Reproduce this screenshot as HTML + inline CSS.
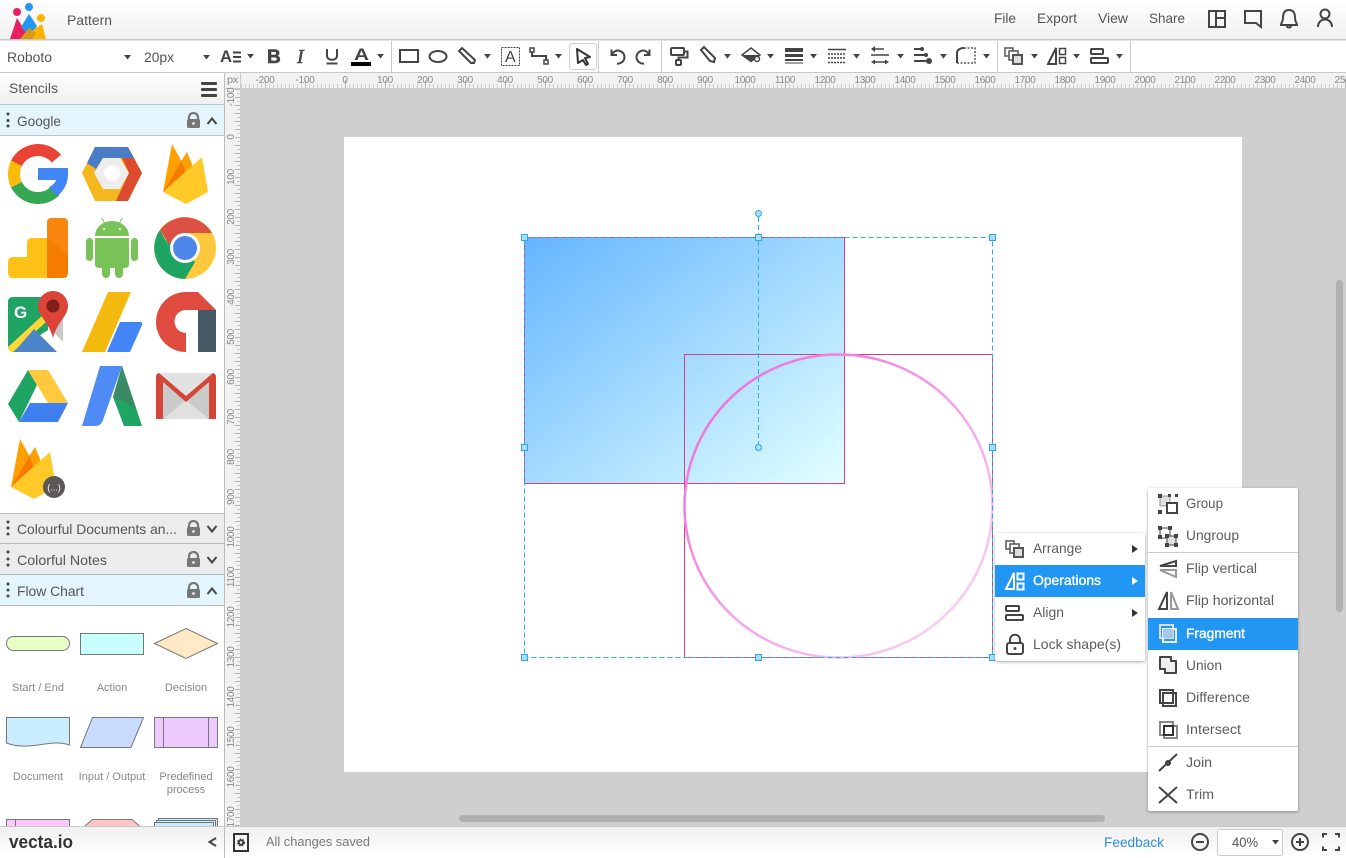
<!DOCTYPE html>
<html><head><meta charset="utf-8"><title>Pattern</title>
<style>
html,body{margin:0;padding:0;width:1346px;height:858px;overflow:hidden;background:#fff}
svg{display:block}
text{font-family:"Liberation Sans",sans-serif;fill:#555;font-size:14px}
.r text{font-size:10px;fill:#888;letter-spacing:-.3px}
.m text{font-size:14px;fill:#5c5c5c}
.i{fill:none;stroke:#444;stroke-width:2}
</style></head><body>
<svg width="1346" height="858" viewBox="0 0 1346 858" xmlns="http://www.w3.org/2000/svg" shape-rendering="geometricPrecision">
<defs>
<linearGradient id="top" x1="0" y1="0" x2="0" y2="1"><stop offset="0" stop-color="#fff"/><stop offset="1" stop-color="#f0f0f0"/></linearGradient>
<linearGradient id="bot" x1="0" y1="0" x2="0" y2="1"><stop offset="0" stop-color="#f0f0f0"/><stop offset="1" stop-color="#fff"/></linearGradient>
<linearGradient id="sq" x1="0" y1="0" x2="1" y2="1"><stop offset="0" stop-color="#64b5ff"/><stop offset="1" stop-color="#e2ffff"/></linearGradient>
<linearGradient id="circ" x1="0" y1="0" x2="1" y2="1"><stop offset="0" stop-color="#ee62dc"/><stop offset="1" stop-color="#fbdcf6"/></linearGradient>
<pattern id="hx" x="1" y="0" width="4" height="20" patternUnits="userSpaceOnUse"><rect width="1" height="20" fill="#cfcfcf"/></pattern>
<pattern id="hx2" x="1" y="0" width="40" height="20" patternUnits="userSpaceOnUse"><rect x="24" width="1" height="20" fill="#b5b5b5"/></pattern>
<pattern id="vx" x="0" y="1" width="20" height="4" patternUnits="userSpaceOnUse"><rect width="20" height="1" fill="#cfcfcf"/></pattern>
<pattern id="vx2" x="0" y="1" width="20" height="8" patternUnits="userSpaceOnUse"><rect width="20" height="1" fill="#b5b5b5"/></pattern>
<path id="c" d="M0 0h7l-3.500 4.500z" fill="#444"/>
<filter id="sh" x="-10%" y="-10%" width="120%" height="120%"><feDropShadow dx="0" dy="1" stdDeviation="1.500" flood-color="#000" flood-opacity=".35"/></filter>
<g id="fb"><path d="M163 192L172 144L182 162L163 192Z" fill="#ffa000"/><path d="M163 192L187 152L193 167L178 192Z" fill="#f57c00"/><path d="M182 162L187 152L193 167L186 175Z" fill="#ffa000"/><path d="M163 192L202 157L208 192L186 204Z" fill="#ffca28"/></g>
<g id="lk"><path d="M0 7V4.500C0 -1.500 9 -1.500 9 4.500V7" fill="none" stroke="#777" stroke-width="2.200"/><rect x="-2" y="6" width="13" height="9" rx="1.500" fill="#777"/><circle cx="4.500" cy="10.500" r="1.400" fill="#fff" opacity=".85"/></g>
</defs>

<!-- canvas -->
<rect x="225" y="72" width="1121" height="786" fill="#cfcfcf"/>
<rect x="344" y="137" width="898" height="635" fill="#fff"/>

<!-- shapes -->
<rect x="524.500" y="237.500" width="320" height="246" fill="url(#sq)" stroke="#d0408c"/>
<rect x="684.500" y="354.500" width="308" height="303" fill="none" stroke="#d0408c"/>
<ellipse cx="838.500" cy="506" rx="154" ry="151.500" fill="none" stroke="url(#circ)" stroke-width="2.500"/>
<rect x="524.500" y="237.500" width="468" height="420" fill="none" stroke="#34aee0" stroke-dasharray="5 3"/>
<path d="M758.500 217V444" stroke="#34aee0" stroke-dasharray="5 3" fill="none"/>
<g fill="#a9defc" stroke="#2ea6ea">
<rect x="521.500" y="234.500" width="6" height="6"/><rect x="755.500" y="234.500" width="6" height="6"/><rect x="989.500" y="234.500" width="6" height="6"/>
<rect x="521.500" y="444.500" width="6" height="6"/><rect x="989.500" y="444.500" width="6" height="6"/>
<rect x="521.500" y="654.500" width="6" height="6"/><rect x="755.500" y="654.500" width="6" height="6"/><rect x="989.500" y="654.500" width="6" height="6"/>
<circle cx="758.500" cy="213.500" r="3"/><circle cx="758.500" cy="447.500" r="3"/>
</g>

<!-- rulers -->
<rect x="225" y="73" width="1121" height="15" fill="#f2f2f2"/>
<rect x="225" y="88" width="15" height="739" fill="#f2f2f2"/>
<rect x="241" y="84" width="1105" height="4" fill="url(#hx)"/>
<rect x="241" y="80" width="1105" height="8" fill="url(#hx2)"/>
<rect x="237" y="88" width="3" height="739" fill="url(#vx)"/>
<rect x="235" y="88" width="5" height="739" fill="url(#vx2)"/>
<rect x="240" y="73" width="1" height="15" fill="#ccc"/>
<rect x="225" y="88" width="15" height="1" fill="#ccc"/>
<g class="r">
<text x="227" y="83" textLength="11" lengthAdjust="spacingAndGlyphs">px</text>
<text x="265" y="83" text-anchor="middle">-200</text><text x="305" y="83" text-anchor="middle">-100</text><text x="345" y="83" text-anchor="middle">0</text><text x="385" y="83" text-anchor="middle">100</text><text x="425" y="83" text-anchor="middle">200</text><text x="465" y="83" text-anchor="middle">300</text><text x="505" y="83" text-anchor="middle">400</text><text x="545" y="83" text-anchor="middle">500</text><text x="585" y="83" text-anchor="middle">600</text><text x="625" y="83" text-anchor="middle">700</text><text x="665" y="83" text-anchor="middle">800</text><text x="705" y="83" text-anchor="middle">900</text><text x="745" y="83" text-anchor="middle">1000</text><text x="785" y="83" text-anchor="middle">1100</text><text x="825" y="83" text-anchor="middle">1200</text><text x="865" y="83" text-anchor="middle">1300</text><text x="905" y="83" text-anchor="middle">1400</text><text x="945" y="83" text-anchor="middle">1500</text><text x="985" y="83" text-anchor="middle">1600</text><text x="1025" y="83" text-anchor="middle">1700</text><text x="1065" y="83" text-anchor="middle">1800</text><text x="1105" y="83" text-anchor="middle">1900</text><text x="1145" y="83" text-anchor="middle">2000</text><text x="1185" y="83" text-anchor="middle">2100</text><text x="1225" y="83" text-anchor="middle">2200</text><text x="1265" y="83" text-anchor="middle">2300</text><text x="1305" y="83" text-anchor="middle">2400</text><text x="1345" y="83" text-anchor="middle">2500</text>
<g text-anchor="middle">
<text transform="translate(234 97) rotate(-90)">-100</text><text transform="translate(234 137) rotate(-90)">0</text><text transform="translate(234 177) rotate(-90)">100</text><text transform="translate(234 217) rotate(-90)">200</text><text transform="translate(234 257) rotate(-90)">300</text><text transform="translate(234 297) rotate(-90)">400</text><text transform="translate(234 337) rotate(-90)">500</text><text transform="translate(234 377) rotate(-90)">600</text><text transform="translate(234 417) rotate(-90)">700</text><text transform="translate(234 457) rotate(-90)">800</text><text transform="translate(234 497) rotate(-90)">900</text><text transform="translate(234 537) rotate(-90)">1000</text><text transform="translate(234 577) rotate(-90)">1100</text><text transform="translate(234 617) rotate(-90)">1200</text><text transform="translate(234 657) rotate(-90)">1300</text><text transform="translate(234 697) rotate(-90)">1400</text><text transform="translate(234 737) rotate(-90)">1500</text><text transform="translate(234 777) rotate(-90)">1600</text><text transform="translate(234 817) rotate(-90)">1700</text>
</g></g>

<!-- scrollbars -->
<rect x="459" y="815" width="646" height="7" rx="3.500" fill="#b0b0b0"/>
<rect x="1336" y="280" width="7" height="332" rx="3.500" fill="#b0b0b0"/>

<!-- top bar -->
<rect width="1346" height="39" fill="url(#top)"/>
<rect y="39" width="1346" height="1.500" fill="#c8c8c8"/>
<path d="M10 39L17 18L30 39Z" fill="#e91e63"/><path d="M21 27L29 14L37 26L30 36Z" fill="#2196f3"/><path d="M20 39L42 24L46 39Z" fill="#ffb300"/><path d="M20 39L29 28L36 33L32 39Z" fill="#d89a16"/>
<circle cx="17" cy="12" r="4" fill="#e91e63"/><circle cx="29" cy="7" r="4" fill="#2196f3"/><circle cx="41" cy="18" r="4" fill="#ffb300"/>
<text x="67" y="25" font-size="13" textLength="45" lengthAdjust="spacingAndGlyphs">Pattern</text>
<text x="994" y="23" textLength="22" lengthAdjust="spacingAndGlyphs">File</text>
<text x="1037" y="23" textLength="40" lengthAdjust="spacingAndGlyphs">Export</text>
<text x="1098" y="23" textLength="30" lengthAdjust="spacingAndGlyphs">View</text>
<text x="1149" y="23" textLength="36" lengthAdjust="spacingAndGlyphs">Share</text>
<g class="i">
<rect x="1209" y="11" width="16" height="16"/><path d="M1216 11V27M1216 18H1225"/>
<path d="M1245 11H1261V27L1256 23H1245Z"/>
<path d="M1289 10C1284 10 1283 14 1283 18C1283 22 1281 23 1281 25H1297C1297 23 1295 22 1295 18C1295 14 1294 10 1289 10ZM1287 26C1287 28 1291 28 1291 26"/>
<circle cx="1325" cy="14" r="4.500"/><path d="M1318 27C1318 17 1332 17 1332 27"/>
</g>

<!-- toolbar -->
<rect y="40.500" width="1346" height="31.500" fill="#fff"/>
<rect y="72" width="1346" height="1" fill="#c8c8c8"/>
<g fill="#ccc"><rect x="391" y="41" width="1" height="31"/><rect x="598" y="41" width="1" height="31"/><rect x="661" y="41" width="1" height="31"/><rect x="997" y="41" width="1" height="31"/><rect x="1130" y="41" width="1" height="31"/></g>
<text x="7" y="62" textLength="45" lengthAdjust="spacingAndGlyphs">Roboto</text>
<text x="144" y="62" textLength="30" lengthAdjust="spacingAndGlyphs">20px</text>
<use href="#c" x="124" y="55"/><use href="#c" x="203" y="55"/><use href="#c" x="247" y="54"/><use href="#c" x="377" y="54"/><use href="#c" x="484" y="54"/><use href="#c" x="555" y="54"/><use href="#c" x="724" y="54"/><use href="#c" x="767" y="54"/><use href="#c" x="810" y="54"/><use href="#c" x="853" y="54"/><use href="#c" x="897" y="54"/><use href="#c" x="940" y="54"/><use href="#c" x="983" y="54"/><use href="#c" x="1031" y="54"/><use href="#c" x="1073" y="54"/><use href="#c" x="1116" y="54"/>
<text x="220" y="62" font-size="17" font-weight="bold" style="font-size:17px;fill:#444" textLength="12" lengthAdjust="spacingAndGlyphs">A</text>
<path d="M233 52.500H241M233 57H241M233 61.500H241" class="i" stroke-width="1.500"/>
<text x="267" y="63" style="font-size:19px;font-weight:bold;fill:#444;stroke:#444;stroke-width:.6px">B</text>
<text x="297" y="63" style="font-family:'Liberation Serif',serif;font-size:20px;font-style:italic;fill:#444;stroke:#444;stroke-width:.5px">I</text>
<path d="M327 49V56C327 61 337 61 337 56V49M326.500 63.500H337.500" class="i"/>
<text x="354" y="60" style="font-size:17px;fill:#444;font-weight:bold" textLength="15" lengthAdjust="spacingAndGlyphs">A</text>
<rect x="351" y="62" width="20" height="4" fill="#000"/>
<g class="i">
<rect x="400" y="50" width="18" height="12"/>
<ellipse cx="438" cy="56.500" rx="8.500" ry="5.500"/>
<path d="M459 51L462 48L475 60L474 63L471 63Z"/>
<rect x="501.500" y="47.500" width="18" height="18" stroke-width="1" stroke-dasharray="2 1"/>
<rect x="530" y="48" width="4" height="4" stroke-width="1.500"/><rect x="544" y="60" width="4" height="4" stroke-width="1.500"/><path d="M532 52V56H546V60"/>
<path d="M611.500 49.500V55H617"/><path d="M612 54.500A6.500 6.500 0 1 1 617 63.500"/>
<path d="M649.500 49.500V55H644"/><path d="M649 54.500A6.500 6.500 0 1 0 644 63.500"/>
<rect x="671" y="48" width="13" height="7" rx="1"/><path d="M684 51.500H687.500V57.500H678.500V60"/>
<rect x="676" y="60" width="5" height="5" rx="1"/>
<path d="M701 50L704 47L715 58L714 62L710 61Z"/>
</g>
<text x="505" y="62" style="font-size:16px;fill:#444">A</text>
<rect x="569.500" y="43.500" width="27" height="26" rx="3" fill="#fff" stroke="#d0d0d0"/>
<path d="M577 49L590 57L585 58L588 64L586 65L583 60L578 63Z" fill="#fff" stroke="#333" stroke-width="2" stroke-linejoin="round"/>
<path d="M751 48L760 55L751 61.500L742 55Z" fill="none" stroke="#444" stroke-width="1.500"/><path d="M742 55H760L751 61.500Z" fill="#444"/><circle cx="757" cy="59" r="2.500" fill="#fff" stroke="#444" stroke-width="1.500"/>
<g fill="#444"><rect x="785" y="48" width="18" height="4"/><rect x="785" y="54" width="18" height="3"/><rect x="785" y="59" width="18" height="2"/><rect x="785" y="62.500" width="18" height="1"/></g>
<g stroke="#444" fill="none"><path d="M828 49.500H846" stroke-width="1.500"/><path d="M828 54H846M828 58H846M828 62.500H846" stroke-width="1.500" stroke-dasharray="2 1"/></g>
<g stroke="#444" stroke-width="1.500" fill="none"><path d="M873 49H884M871 55H889M873 62H887"/></g>
<g fill="#444"><path d="M871 49L875 46V52Z"/><path d="M871 62L875 59.500V64.500Z"/><path d="M889 62L885 59.500V64.500Z"/></g>
<g fill="#444"><rect x="914" y="48" width="8" height="2"/><rect x="914" y="54" width="13" height="2"/><rect x="914" y="60" width="17" height="2"/><circle cx="929" cy="61" r="3"/><circle cx="926" cy="55" r="2"/><circle cx="922" cy="49" r="2"/></g>
<path d="M964 48H975V63H957V53" fill="none" stroke="#555" stroke-width="1.500" stroke-dasharray="2 1.500"/>
<path d="M957 63V53C957 50 960 48 964 48" fill="none" stroke="#444" stroke-width="2"/>
<g fill="#fff" stroke="#555" stroke-width="1.500"><rect x="1005" y="48" width="8" height="8"/><rect x="1009" y="51" width="9" height="9"/></g><rect x="1013" y="55" width="9" height="9" fill="#ddd" stroke="#555" stroke-width="2"/>
<g class="i"><path d="M1048 64L1056 48V64Z"/><rect x="1059.500" y="48.500" width="6" height="6" stroke-width="1.500"/><rect x="1059.500" y="57.500" width="6" height="6" stroke-width="1.500"/>
<rect x="1091" y="49" width="12" height="5" rx="1"/><rect x="1091" y="58" width="17" height="5" rx="1"/></g>

<!-- sidebar -->
<rect y="73" width="225" height="785" fill="#fff"/>
<rect x="224" y="73" width="1" height="754" fill="#bbb"/>
<rect y="73" width="224" height="31" fill="url(#top)"/>
<rect y="104" width="224" height="1" fill="#bcc5c9"/>
<text x="9" y="93" textLength="49" lengthAdjust="spacingAndGlyphs">Stencils</text>
<g fill="#444"><rect x="201" y="82" width="16" height="3" rx="1"/><rect x="201" y="88" width="16" height="3" rx="1"/><rect x="201" y="94" width="16" height="3" rx="1"/></g>
<rect y="105" width="224" height="30" fill="#e3f6fd"/>
<rect y="135" width="224" height="1" fill="#bcc5c9"/>
<rect y="513" width="224" height="1" fill="#bbb"/>
<rect y="514" width="224" height="29" fill="#ececec"/>
<rect y="543" width="224" height="1" fill="#bbb"/>
<rect y="544" width="224" height="30" fill="#ececec"/>
<rect y="574" width="224" height="1" fill="#bbb"/>
<rect y="575" width="224" height="30" fill="#e3f6fd"/>
<rect y="605" width="224" height="1" fill="#bbb"/>
<text x="17" y="126" textLength="44" lengthAdjust="spacingAndGlyphs">Google</text>
<text x="17" y="534" textLength="160" lengthAdjust="spacingAndGlyphs">Colourful Documents an...</text>
<text x="17" y="565" textLength="90" lengthAdjust="spacingAndGlyphs">Colorful Notes</text>
<text x="17" y="596" textLength="67" lengthAdjust="spacingAndGlyphs">Flow Chart</text>
<g fill="#444"><circle cx="8" cy="114" r="1.500"/><circle cx="8" cy="120.500" r="1.500"/><circle cx="8" cy="126" r="1.500"/><circle cx="8" cy="522" r="1.500"/><circle cx="8" cy="528" r="1.500"/><circle cx="8" cy="534" r="1.500"/><circle cx="8" cy="552" r="1.500"/><circle cx="8" cy="559" r="1.500"/><circle cx="8" cy="565" r="1.500"/><circle cx="8" cy="584" r="1.500"/><circle cx="8" cy="590" r="1.500"/><circle cx="8" cy="596" r="1.500"/></g>
<use href="#lk" x="189" y="113"/><use href="#lk" x="189" y="521"/><use href="#lk" x="189" y="552"/><use href="#lk" x="189" y="583"/>
<g fill="none" stroke="#444" stroke-width="2"><path d="M207.500 124L212 118.500L216.500 124"/><path d="M207.500 526L212 531.500L216.500 526"/><path d="M207.500 557L212 562.500L216.500 557"/><path d="M207.500 594L212 588.500L216.500 594"/></g>

<!-- Google -->
<path d="M56.400 158.600A24 24 0 0 0 16.500 163.300" fill="none" stroke="#ea4335" stroke-width="12"/>
<path d="M16.500 163.300A24 24 0 0 0 16.500 184.700" fill="none" stroke="#fbbc05" stroke-width="12"/>
<path d="M16.500 184.700A24 24 0 0 0 55 191" fill="none" stroke="#34a853" stroke-width="12"/>
<path d="M38 168H68V174C68 184 63 192 57 196L49 187C53 185 55 183 56 180H38Z" fill="#4285f4"/>
<!-- cloud -->
<path d="M95 147H128L142 173L128 201H95L82 173Z" fill="#f4b71e" stroke="#f4b71e" stroke-width="0"/>
<path d="M95 147H128L134 158H103L96 169L87 163Z" fill="#4a7bc6"/>
<path d="M122 158H134L142 173L128 201H116L129 173Z" fill="#dd4b2f"/>
<path d="M94 173L103 158H120L129 173L120 189H103Z" fill="#ededed"/>
<circle cx="112" cy="173" r="8" fill="#fff"/>
<!-- firebase -->
<use href="#fb"/>
<!-- analytics -->
<path d="M47 223Q47 218 52 218H63Q68 218 68 223V273Q68 278 63 278H47Z" fill="#f57c00"/><path d="M47 223Q47 218 52 218H63Q68 218 68 223V256L47 237Z" fill="#f9860f"/>
<path d="M27 243Q27 238 32 238H47V278H13Q8 278 8 273V262Q8 257 13 257H27Z" fill="#ffc017"/>
<!-- android -->
<g fill="#78c257"><path d="M95 236A17 15 0 0 1 129 236Z"/><path d="M95 238H129V264Q129 268 125 268H99Q95 268 95 264Z"/><rect x="86" y="238" width="7" height="23" rx="3.500"/><rect x="131" y="238" width="7" height="23" rx="3.500"/><rect x="102" y="262" width="8" height="16" rx="4"/><rect x="115" y="262" width="8" height="16" rx="4"/></g>
<path d="M102 218L105 224M122 218L119 224" stroke="#78c257" stroke-width="1"/><circle cx="104" cy="229" r="1" fill="#fff"/><circle cx="120" cy="229" r="1" fill="#fff"/>
<!-- chrome -->
<circle cx="185" cy="248" r="31" fill="#ffc83d"/>
<path d="M185 279A31 31 0 0 1 160 230L173 254L185 262Z" fill="#1da462"/><path d="M185 279L172 255L163 232L185 248L195 262Z" fill="#1da462"/>
<path d="M160 230A31 31 0 0 1 212 233H185Q172 233 172 248Z" fill="#dd5045"/>
<circle cx="185" cy="248" r="15" fill="#fff"/><circle cx="185" cy="248" r="12" fill="#4f86ec"/>
<!-- maps -->
<path d="M13 297H48V330L14 352Q8 352 8 346V302Q8 297 13 297Z" fill="#1fa463"/>
<path d="M8 347L43 315L46 322L13 352Q8 352 8 347Z" fill="#fdd835"/>
<path d="M14 352L34 329L57 352Z" fill="#4b84c8"/>
<path d="M46 322L63 340V325H55Z" fill="#fff"/><path d="M44 322L63 342V312L53 331Z" fill="#c8c8c8"/>
<path d="M53 291A15 15 0 0 1 68 306C68 316 57 322 53 338C49 322 38 316 38 306A15 15 0 0 1 53 291Z" fill="#db4437"/>
<circle cx="53" cy="306" r="6.500" fill="#7f1f18"/>
<text x="14" y="318" style="font-size:17px;font-weight:bold;fill:#fff">G</text>
<!-- adsense -->
<path d="M82 352L108 292H131L105 352Z" fill="#f4b90f"/>
<path d="M107 352L120 322H140Q143 322 142 325L130 352Z" fill="#4285f4"/>
<!-- admob -->
<path d="M186 352V333A11.500 11.500 0 0 1 186 310H216L198 292H186A30 30 0 0 0 186 352Z" fill="#e04b3f"/>
<rect x="198" y="310" width="18" height="42" fill="#455a64"/>
<!-- drive -->
<path d="M8 404L28 370L37 385L19 422Z" fill="#1fa463"/>
<path d="M19 422L30 403H68L58 422Z" fill="#3f7fef"/>
<path d="M28 370H48L68 403H48Z" fill="#ffc83d"/>
<!-- adwords -->
<path d="M82 426L100 366H122L103 420Q101 426 96 426Z" fill="#4f8bf5"/>
<path d="M122 366L142 426H124L113 397Z" fill="#1fa463"/><path d="M122 366L136 408L113 397Z" fill="#3b8a66"/>
<!-- gmail -->
<rect x="156" y="373" width="60" height="46" rx="3" fill="#e2e2e2"/>
<path d="M163 376L186 400L209 376V419H163Z" fill="#cacaca"/>
<path d="M163 419L186 400L209 419Z" fill="#e0e0e0"/>
<path d="M159 373L186 396L213 373Q216 374 216 377V419H209V382L186 402L163 382V419H156V377Q156 374 159 373Z" fill="#d44638"/>
<!-- firebase functions -->
<use href="#fb" transform="translate(-152 295)"/>
<circle cx="54" cy="487" r="11" fill="#5d5757"/>
<text x="54" y="490.500" text-anchor="middle" style="font-size:9px;fill:#fff">(...)</text>

<!-- flow -->
<g stroke="#777">
<rect x="6.500" y="636.500" width="63" height="14" rx="7" fill="#e8ffc6"/>
<rect x="80.500" y="633.500" width="63" height="21" fill="#c8ffff"/>
<path d="M154.500 643.500L186 628.500L217.500 643.500L186 658.500Z" fill="#ffe9c6"/>
<path d="M6.500 717.500H69.500V745C50 738 30 752 6.500 743Z" fill="#c9ecff"/>
<path d="M92.500 717.500H143.500L131 747.500H80.500Z" fill="#c9dcff"/>
<rect x="154.500" y="717.500" width="63" height="30" fill="#eccaff"/><path d="M163.500 717.500V747.500M208.500 717.500V747.500" fill="none"/>
<rect x="6.500" y="819.500" width="63" height="14" fill="#fcc9ff"/><path d="M15.500 819.500V830" fill="none"/>
<path d="M80.500 830L92.500 819.500H132L144 830Z" fill="#ffc4c4"/>
<rect x="158.500" y="818.500" width="59" height="14" fill="#c9ecff"/><rect x="156.500" y="820.500" width="59" height="14" fill="#c9ecff"/><rect x="154.500" y="822.500" width="59" height="14" fill="#c9ecff"/>
</g>
<g text-anchor="middle" style="fill:#888">
<text x="38" y="691" style="font-size:11px;fill:#888">Start / End</text>
<text x="112" y="691" style="font-size:11px;fill:#888">Action</text>
<text x="186" y="691" style="font-size:11px;fill:#888">Decision</text>
<text x="38" y="780" style="font-size:11px;fill:#888">Document</text>
<text x="112" y="780" style="font-size:11px;fill:#888">Input / Output</text>
<text x="186" y="780" style="font-size:11px;fill:#888">Predefined</text>
<text x="186" y="793" style="font-size:11px;fill:#888">process</text>
</g>

<!-- bottom bar -->
<rect y="827" width="1346" height="31" fill="url(#bot)"/>
<rect y="826" width="1346" height="1" fill="#c8c8c8"/>
<rect x="224" y="827" width="1" height="31" fill="#bbb"/>
<text x="9" y="848" style="font-size:18px;font-weight:bold;fill:#333" textLength="64" lengthAdjust="spacingAndGlyphs">vecta.io</text>
<path d="M216 838L209.500 842L216 846" fill="none" stroke="#444" stroke-width="2"/>
<rect x="234" y="834" width="14" height="17" fill="none" stroke="#333" stroke-width="2"/>
<circle cx="241" cy="842.500" r="3" fill="#444" stroke="#333" stroke-width="2" stroke-dasharray="1.500 1"/><circle cx="241" cy="842.500" r="1.200" fill="#fff"/>
<text x="266" y="846" style="font-size:12.500px;fill:#777" textLength="104" lengthAdjust="spacingAndGlyphs">All changes saved</text>
<text x="1104" y="847" style="fill:#2d8fe0" textLength="60" lengthAdjust="spacingAndGlyphs">Feedback</text>
<g class="i"><circle cx="1200" cy="842" r="8"/><path d="M1196 842H1204"/><circle cx="1300" cy="842" r="8"/><path d="M1296 842H1304M1300 838V846"/>
<path d="M1323 837.500V834H1327M1335 834H1339V837.500M1339 846.500V850H1335M1327 850H1323V846.500"/></g>
<rect x="1217.500" y="829.500" width="65" height="26" rx="2" fill="#fff" stroke="#ccc"/>
<text x="1232" y="847" textLength="26" lengthAdjust="spacingAndGlyphs">40%</text>
<use href="#c" x="1272" y="840"/>

<!-- menu 1 -->
<g class="m">
<rect x="995" y="533" width="150" height="128" rx="2" fill="#fff" filter="url(#sh)"/>
<rect x="995" y="565" width="150" height="32" fill="#2196f3"/>
<text x="1033" y="553" textLength="49" lengthAdjust="spacingAndGlyphs">Arrange</text>
<text x="1033" y="585" style="fill:#fff;stroke:#fff;stroke-width:.35px" textLength="68" lengthAdjust="spacingAndGlyphs">Operations</text>
<text x="1033" y="617" textLength="31" lengthAdjust="spacingAndGlyphs">Align</text>
<text x="1033" y="649" textLength="88" lengthAdjust="spacingAndGlyphs">Lock shape(s)</text>
<path d="M1132 545L1138 549L1132 553Z" fill="#333"/><path d="M1132 577L1138 581L1132 585Z" fill="#fff"/><path d="M1132 609L1138 613L1132 617Z" fill="#333"/>
<g fill="#fff" stroke="#555" stroke-width="1.500"><rect x="1006" y="541" width="8" height="8"/><rect x="1010" y="544" width="9" height="9"/></g><rect x="1014" y="548" width="9" height="9" fill="#ddd" stroke="#555" stroke-width="2"/>
<g fill="none" stroke="#fff" stroke-width="2"><path d="M1006 589L1014 573V589Z"/><rect x="1017.500" y="573.500" width="6" height="6"/><rect x="1017.500" y="583.500" width="6" height="6"/></g>
<g class="i"><rect x="1006" y="606" width="13" height="5" rx="1"/><rect x="1006" y="615" width="17" height="5" rx="1"/>
<rect x="1007" y="643" width="16" height="11" rx="2"/><path d="M1010 643V640C1010 633 1020 633 1020 640V643"/></g>
<circle cx="1015" cy="648.500" r="1.500" fill="#444"/>
</g>

<!-- menu 2 -->
<g class="m">
<rect x="1148" y="488" width="150" height="323" rx="2" fill="#fff" filter="url(#sh)"/>
<rect x="1148" y="552" width="150" height="1" fill="#ccc"/>
<rect x="1148" y="746" width="150" height="1" fill="#ccc"/>
<rect x="1148" y="618" width="150" height="32" fill="#2196f3"/>
<text x="1186" y="508" textLength="37" lengthAdjust="spacingAndGlyphs">Group</text>
<text x="1186" y="540" textLength="53" lengthAdjust="spacingAndGlyphs">Ungroup</text>
<text x="1186" y="573" textLength="71" lengthAdjust="spacingAndGlyphs">Flip vertical</text>
<text x="1186" y="605" textLength="88" lengthAdjust="spacingAndGlyphs">Flip horizontal</text>
<text x="1186" y="638" style="fill:#fff;stroke:#fff;stroke-width:.35px" textLength="59" lengthAdjust="spacingAndGlyphs">Fragment</text>
<text x="1186" y="670" textLength="36" lengthAdjust="spacingAndGlyphs">Union</text>
<text x="1186" y="702" textLength="64" lengthAdjust="spacingAndGlyphs">Difference</text>
<text x="1186" y="734" textLength="55" lengthAdjust="spacingAndGlyphs">Intersect</text>
<text x="1186" y="767" textLength="26" lengthAdjust="spacingAndGlyphs">Join</text>
<text x="1186" y="799" textLength="28" lengthAdjust="spacingAndGlyphs">Trim</text>
<!-- group -->
<rect x="1160" y="496" width="10" height="10" fill="#e0e0e0" stroke="#999"/>
<g fill="#444"><rect x="1158" y="494" width="4" height="4"/><rect x="1168" y="494" width="3" height="3"/><rect x="1175" y="494" width="3" height="3"/><rect x="1158" y="510" width="4" height="4"/></g>
<rect x="1167" y="503" width="10" height="10" fill="#fff" stroke="#444" stroke-width="2"/>
<!-- ungroup -->
<rect x="1160" y="528" width="10" height="10" fill="#fff" stroke="#444"/>
<g fill="#444"><rect x="1158" y="526" width="4" height="4"/><rect x="1168" y="526" width="4" height="4"/><rect x="1158" y="535" width="4" height="4"/></g>
<rect x="1167" y="536" width="9" height="9" fill="#e0e0e0" stroke="#444"/>
<g fill="#444"><rect x="1165" y="534" width="4" height="4"/><rect x="1174" y="534" width="4" height="4"/><rect x="1165" y="543" width="4" height="4"/><rect x="1174" y="543" width="4" height="4"/></g>
<!-- flips -->
<path d="M1160 566L1176 561V566Z" fill="none" stroke="#444" stroke-width="2"/><path d="M1160 570L1176 570V577Z" fill="#fff" stroke="#999" stroke-width="2"/>
<path d="M1167 592V609H1159Z" fill="none" stroke="#444" stroke-width="2"/><path d="M1171 592V609H1178Z" fill="none" stroke="#999" stroke-width="2"/>
<!-- fragment -->
<rect x="1160" y="625" width="13" height="13" fill="none" stroke="#ddd" stroke-width="2"/><rect x="1163" y="629" width="13" height="13" fill="none" stroke="#eee" stroke-width="2"/><rect x="1163" y="629" width="10" height="9" fill="#9fc9ee"/>
<!-- union -->
<path d="M1160 657H1171V661H1176V673H1165V669H1160Z" fill="#efefef" stroke="#444" stroke-width="2" stroke-linejoin="round"/>
<!-- diff -->
<rect x="1160" y="690" width="13" height="13" fill="#fff" stroke="#444" stroke-width="2"/><rect x="1163" y="693" width="13" height="13" fill="none" stroke="#444" stroke-width="2"/>
<!-- intersect -->
<rect x="1160" y="722" width="13" height="13" fill="none" stroke="#888" stroke-width="2"/><rect x="1164" y="726" width="13" height="12" fill="none" stroke="#888" stroke-width="2"/><rect x="1164" y="726" width="9" height="9" fill="none" stroke="#333" stroke-width="2"/>
<!-- join -->
<path d="M1159 771L1177 754" stroke="#444" stroke-width="2"/><circle cx="1168" cy="763" r="3" fill="#444"/>
<!-- trim -->
<path d="M1159 787L1177 803M1177 787L1159 803" stroke="#444" stroke-width="2"/>
</g>
</svg>
</body></html>
